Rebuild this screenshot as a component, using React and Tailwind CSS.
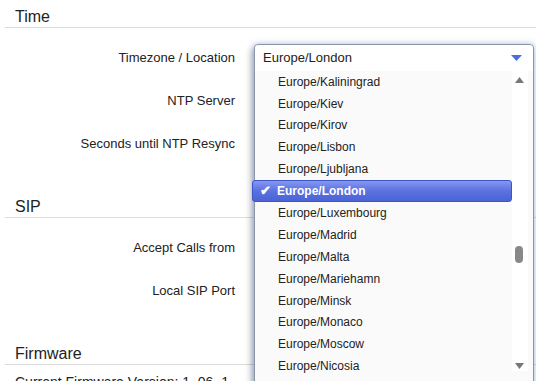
import React from 'react';

const zones = [
  'Europe/Kaliningrad',
  'Europe/Kiev',
  'Europe/Kirov',
  'Europe/Lisbon',
  'Europe/Ljubljana',
  'Europe/London',
  'Europe/Luxembourg',
  'Europe/Madrid',
  'Europe/Malta',
  'Europe/Mariehamn',
  'Europe/Minsk',
  'Europe/Monaco',
  'Europe/Moscow',
  'Europe/Nicosia',
  'Europe/Oslo',
];

function Section({ title, rows, last }) {
  return (
    <div className={last ? '' : 'mb-[25px]'}>
      <div className="h-[28px] border-b border-[#dcdcdc] pl-[10px] pt-[7px] text-[16px] leading-[20px] text-[#222]">
        {title}
      </div>
      <div className="pt-[8px]">
        {rows.map((label) => (
          <div key={label} className="flex h-[43px] items-center">
            <div className="w-[230px] text-right text-[13px] text-[#222]">{label}</div>
          </div>
        ))}
      </div>
    </div>
  );
}

function ZoneList() {
  return (
    <div className="absolute left-[254px] top-[44px] h-[360px] w-[280px] rounded-t-[4px] border border-[#8c95a8] bg-[#fafafa] shadow-[0_0_6px_rgba(80,110,220,0.45),-3px_4px_6px_rgba(0,0,0,0.25)]">
      <div className="flex h-[26px] items-center justify-between rounded-t-[4px] bg-white pl-[8px] pr-[11px]">
        <span className="text-[13px] text-[#222]">Europe/London</span>
        <svg width="11" height="6" viewBox="0 0 11 6">
          <path d="M0 0 H11 L5.5 6 Z" fill="#4a6fe3" />
        </svg>
      </div>
      <div className="flex">
        <div className="flex-1">
          {zones.map((z) => {
            const active = z === 'Europe/London';
            return active ? (
              <div
                key={z}
                className="relative -ml-[3px] flex h-[22.5px] items-center rounded-[3px] border border-[#3d55c8] bg-gradient-to-b from-[#8497ef] via-[#5a71e0] to-[#4c63d6] pl-[7px] text-[12px] font-bold text-white"
              >
                <span className="w-[17px] text-[13px]">✔</span>
                <span>{z}</span>
              </div>
            ) : (
              <div key={z} className="flex h-[21.8px] items-center pl-[23px] text-[12px] text-[#222]">
                {z}
              </div>
            );
          })}
        </div>
        <div className="relative mr-[5px] h-[300px] w-[16px] bg-white">
          <svg className="absolute left-[3px] top-[6px]" width="9" height="6" viewBox="0 0 9 6">
            <path d="M4.5 0 L9 6 H0 Z" fill="#777" />
          </svg>
          <div className="absolute left-[3px] top-[175px] h-[17px] w-[8px] rounded-full bg-[#888]" />
          <svg className="absolute left-[3px] top-[292px]" width="9" height="6" viewBox="0 0 9 6">
            <path d="M0 0 H9 L4.5 6 Z" fill="#777" />
          </svg>
        </div>
      </div>
    </div>
  );
}

export default function App() {
  return (
    <div
      className="relative h-[381px] w-[536px] overflow-hidden bg-white"
      style={{ fontFamily: '"Liberation Sans", Arial, sans-serif' }}
    >
      <div className="ml-[5px]">
        <Section title="Time" rows={['Timezone / Location', 'NTP Server', 'Seconds until NTP Resync']} />
        <Section title="SIP" rows={['Accept Calls from', 'Local SIP Port']} />
        <div className="h-[28px] border-b border-[#dcdcdc] pl-[10px] pt-[7px] text-[16px] leading-[20px] text-[#222]">
          Firmware
        </div>
        <div className="pl-[10px] pt-[7px] text-[14px] text-[#222]">Current Firmware Version: 1. 06. 1</div>
      </div>
      <ZoneList />
    </div>
  );
}
